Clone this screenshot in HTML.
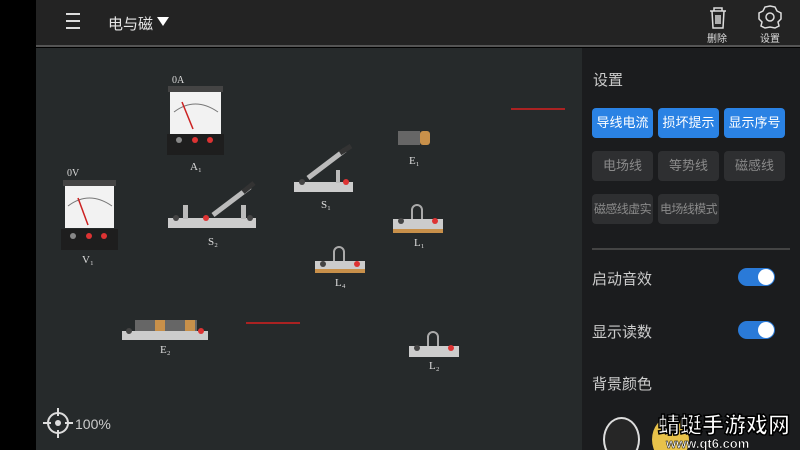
<!DOCTYPE html>
<html style="overflow:hidden;width:800px;height:450px"><head><meta charset="utf-8"><style>
*{margin:0;padding:0;box-sizing:border-box}
body{width:800px;height:450px;overflow:hidden;background:#000;font-family:"Liberation Sans","Noto Sans CJK SC",sans-serif;position:relative}
.a{position:absolute}
.top{left:36px;top:0;width:764px;height:47px;background:#232323;border-bottom:2px solid #555}
.cv{left:36px;top:48px;width:546px;height:402px;background:#262a2b}
.pn{left:582px;top:48px;width:218px;height:402px;background:#1b1c1e;overflow:hidden}
.t{color:#ccc;font-size:15px}
.b{position:absolute;width:61px;height:30px;border-radius:4px;color:#fff;font-size:13px;text-align:center;line-height:30px;white-space:nowrap;overflow:hidden}
.bl{background:#2a82e4}.gr{background:#2e2f31;color:#8a8a8a}
.sm{font-size:12px;letter-spacing:-0.6px}
.tg{position:absolute;left:738px;width:37px;height:18px;border-radius:9px;background:#2a7ad8}
.tg:after{content:"";position:absolute;right:1px;top:1px;width:16px;height:16px;border-radius:50%;background:#fff}
</style></head><body>
<div class="a top"></div>
<div class="a" style="left:66px;top:13px;width:14px;height:2px;background:#ddd;box-shadow:0 7px 0 #ddd,0 14px 0 #ddd"></div>
<div class="a" style="left:108px;top:13px;color:#e6e6e6;font-size:15px">电与磁</div>
<div class="a" style="left:157px;top:17px;width:0;height:0;border-left:6px solid transparent;border-right:6px solid transparent;border-top:9px solid #fff"></div>
<svg class="a" style="left:700px;top:3px" width="90" height="30" viewBox="0 0 90 30" fill="none" stroke="#ddd" stroke-width="1.5">
<path d="M10 8h16M14 8V5h8v3M12 8l1 17h10l1-17M16 12v9M18 12v9M20 12v9"/>
<path d="M70 3l5 1 2 4 4 2 0 6-3 3 1 4-4 2-5-1-5 1-4-2 1-4-3-3 0-6 4-2 2-4z"/>
<circle cx="70" cy="14" r="4"/>
</svg>
<div class="a" style="left:707px;top:30px;color:#ddd;font-size:10px">删除</div>
<div class="a" style="left:760px;top:30px;color:#ddd;font-size:10px">设置</div>
<div class="a cv"></div>
<svg class="a" style="left:0;top:0" width="582" height="450" font-family="Liberation Serif" font-size="10" fill="#ddd">
<text x="172" y="83">0A</text>
<rect x="168" y="86" width="55" height="6" fill="#444"/>
<rect x="170" y="92" width="51" height="42" fill="#f2f2f2"/>
<path d="M174 112 Q195 96 218 112" stroke="#777" fill="none"/>
<line x1="182" y1="102" x2="193" y2="129" stroke="#c22" stroke-width="1.5"/>
<rect x="167" y="134" width="57" height="21" fill="#1e1e1e"/>
<circle cx="179" cy="140" r="3" fill="#888"/><circle cx="195" cy="140" r="3" fill="#d33"/><circle cx="210" cy="140" r="3" fill="#d33"/>
<text x="190" y="170" font-size="11">A₁</text>
<text x="67" y="176">0V</text>
<rect x="63" y="180" width="53" height="6" fill="#444"/>
<rect x="65" y="186" width="49" height="42" fill="#f2f2f2"/>
<path d="M68 206 Q89 190 112 206" stroke="#777" fill="none"/>
<line x1="78" y1="198" x2="88" y2="225" stroke="#c22" stroke-width="1.5"/>
<rect x="61" y="229" width="57" height="21" fill="#1e1e1e"/>
<circle cx="73" cy="236" r="3" fill="#888"/><circle cx="89" cy="236" r="3" fill="#d33"/><circle cx="104" cy="236" r="3" fill="#d33"/>
<text x="82" y="263" font-size="11">V₁</text>
<rect x="168" y="218" width="88" height="10" fill="#ccc"/>
<rect x="183" y="205" width="5" height="14" fill="#bbb"/><rect x="241" y="205" width="5" height="14" fill="#bbb"/>
<line x1="213" y1="215" x2="250" y2="187" stroke="#bbb" stroke-width="5"/>
<line x1="243" y1="192" x2="254" y2="183" stroke="#333" stroke-width="5"/>
<circle cx="206" cy="218" r="3" fill="#d33"/><circle cx="176" cy="218" r="3" fill="#444"/><circle cx="250" cy="218" r="3" fill="#444"/>
<text x="208" y="245" font-size="11">S₂</text>
<rect x="294" y="182" width="59" height="10" fill="#ccc"/>
<rect x="336" y="170" width="4" height="13" fill="#bbb"/>
<line x1="308" y1="178" x2="345" y2="150" stroke="#bbb" stroke-width="5"/>
<line x1="340" y1="153" x2="351" y2="146" stroke="#333" stroke-width="5"/>
<circle cx="302" cy="182" r="3" fill="#444"/><circle cx="346" cy="182" r="3" fill="#d33"/>
<text x="321" y="208" font-size="11">S₁</text>
<rect x="398" y="131" width="22" height="14" fill="#666"/><rect x="420" y="131" width="10" height="14" rx="3" fill="#c8904a"/>
<text x="409" y="164" font-size="11">E₁</text>
<rect x="393" y="219" width="50" height="10" fill="#ccc"/><rect x="393" y="229" width="50" height="4" fill="#c8904a"/>
<path d="M412 219v-9a5 5 0 0 1 10 0v9" stroke="#aaa" fill="none" stroke-width="2"/>
<circle cx="401" cy="221" r="3" fill="#444"/><circle cx="435" cy="221" r="3" fill="#d33"/>
<text x="414" y="246" font-size="11">L₁</text>
<rect x="315" y="261" width="50" height="8" fill="#ccc"/><rect x="315" y="269" width="50" height="4" fill="#c8904a"/>
<path d="M334 261v-9a5 5 0 0 1 10 0v9" stroke="#aaa" fill="none" stroke-width="2"/>
<circle cx="323" cy="264" r="3" fill="#444"/><circle cx="357" cy="264" r="3" fill="#d33"/>
<text x="335" y="286" font-size="11">L₄</text>
<rect x="409" y="346" width="50" height="11" fill="#ccc"/>
<path d="M428 346v-9a5 5 0 0 1 10 0v9" stroke="#aaa" fill="none" stroke-width="2"/>
<circle cx="417" cy="348" r="3" fill="#444"/><circle cx="451" cy="348" r="3" fill="#d33"/>
<text x="429" y="369" font-size="11">L₂</text>
<rect x="122" y="331" width="86" height="9" fill="#ccc"/>
<rect x="135" y="320" width="62" height="11" fill="#666"/><rect x="155" y="320" width="10" height="11" fill="#c8904a"/><rect x="185" y="320" width="10" height="11" fill="#c8904a"/>
<circle cx="129" cy="331" r="3" fill="#444"/><circle cx="201" cy="331" r="3" fill="#d33"/>
<text x="160" y="353" font-size="11">E₂</text>
<line x1="511" y1="109" x2="565" y2="109" stroke="#a22" stroke-width="2"/>
<line x1="246" y1="323" x2="300" y2="323" stroke="#a22" stroke-width="2"/>
<g stroke="#ddd" stroke-width="2" fill="none"><circle cx="58" cy="423" r="10"/><path d="M58 408v8M58 430v8M43 423h8M65 423h8"/></g>
<circle cx="58" cy="423" r="3" fill="#ddd"/>
<text x="75" y="429" font-family="Liberation Sans" font-size="14" fill="#ccc">100%</text>
</svg>
<div class="a pn">
<div class="a" style="left:21px;top:369px;width:37px;height:45px;border-radius:50%;background:#262626;border:2px solid #ddd"></div>
<div class="a" style="left:70px;top:369px;width:37px;height:45px;border-radius:50%;background:#e8c24a"></div>
<div class="a" style="left:76px;top:360px;color:#fff;font-size:22px;font-weight:900;-webkit-text-stroke:1.5px #000;white-space:nowrap">蜻蜓手游戏网</div>
<div class="a" style="left:84px;top:388px;color:#fff;font-size:13px;font-weight:bold;-webkit-text-stroke:0.5px #000">www.qt6.com</div>
</div>
<div class="a t" style="left:593px;top:69px">设置</div>
<div class="b bl" style="left:592px;top:108px">导线电流</div>
<div class="b bl" style="left:658px;top:108px">损坏提示</div>
<div class="b bl" style="left:724px;top:108px">显示序号</div>
<div class="b gr" style="left:592px;top:151px">电场线</div>
<div class="b gr" style="left:658px;top:151px">等势线</div>
<div class="b gr" style="left:724px;top:151px">磁感线</div>
<div class="b gr sm" style="left:592px;top:194px">磁感线虚实</div>
<div class="b gr sm" style="left:658px;top:194px">电场线模式</div>
<div class="a" style="left:592px;top:248px;width:198px;height:2px;background:#444"></div>
<div class="a t" style="left:592px;top:268px">启动音效</div><div class="tg" style="top:268px"></div>
<div class="a t" style="left:592px;top:321px">显示读数</div><div class="tg" style="top:321px"></div>
<div class="a t" style="left:592px;top:373px">背景颜色</div>
</body></html>
